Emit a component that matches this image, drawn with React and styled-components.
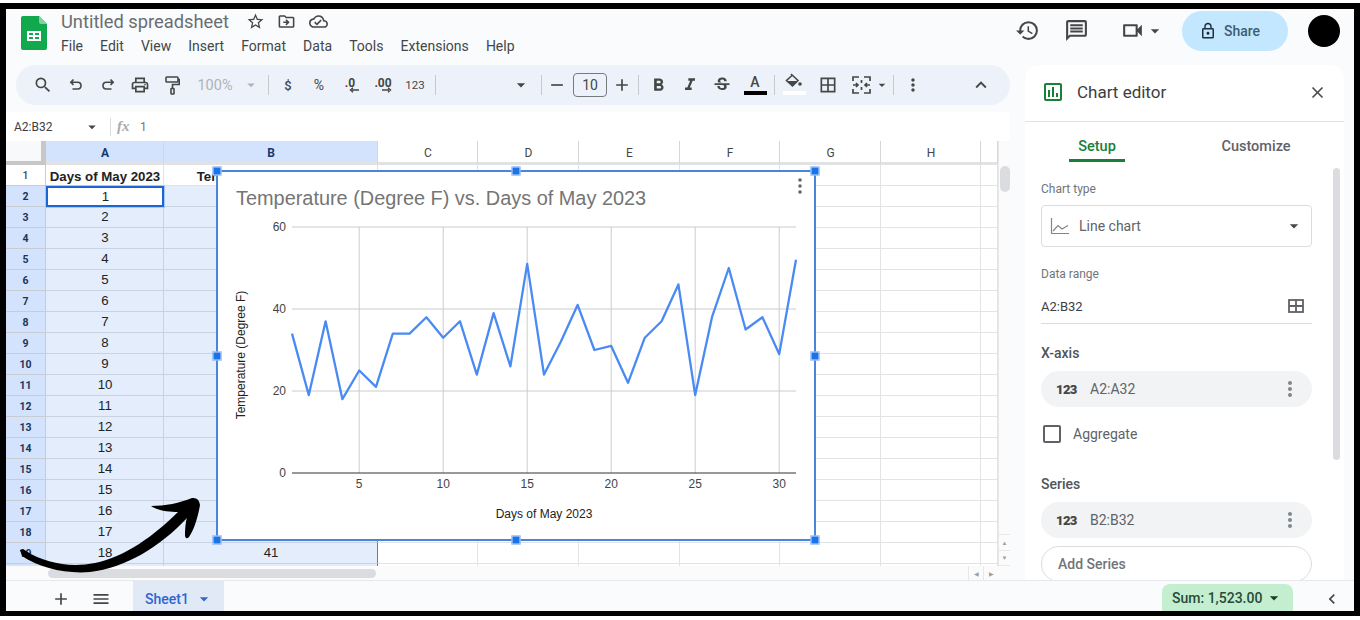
import styled, { createGlobalStyle } from "styled-components"
import {
  MdSearch, MdOutlineLocalPrintshop, MdArrowDropDown,
  MdRemove, MdAdd, MdFormatBold, MdFormatItalic, MdStrikethroughS,
  MdBorderAll, MdMoreVert, MdExpandLess, MdHistory, MdOutlineMessage, MdOutlineVideocam,
  MdLockOutline, MdStarBorder, MdOutlineDriveFileMove, MdOutlineCloudDone, MdClose, MdMenu,
  MdChevronLeft, MdOutlineInsertChart,
} from "react-icons/md"

const temps = [34, 19, 37, 18, 25, 21, 34, 34, 38, 33, 37, 24, 39, 26, 51, 24, 32, 41, 30, 31, 22, 33, 37, 46, 19, 38, 50, 35, 38, 29, 52]
const columns = ["A", "B", "C", "D", "E", "F", "G", "H", ""]
const menus = ["File", "Edit", "View", "Insert", "Format", "Data", "Tools", "Extensions", "Help"]

const GlobalStyle = createGlobalStyle`
  html, body { margin: 0; padding: 0; background: #fff; }
  body { font-family: Roboto, "Liberation Sans", sans-serif; color: #444746; }
  * { box-sizing: border-box; }
`

const Frame = styled.div`
  position: relative;
  width: 1360px;
  height: 613px;
  margin-top: 3px;
  border: solid #000;
  border-width: 6px 6px 5px;
  background: #f9fbfd;
  display: flex;
  flex-direction: column;
  overflow: hidden;
`
const Header = styled.header`
  height: 56px;
  flex: none;
  display: flex;
  align-items: flex-start;
  padding-left: 15px;
`
const LogoSlot = styled.div`
  margin-top: 7px;
`
const TitleBlock = styled.div`
  margin-left: 14px;
  display: flex;
  flex-direction: column;
  flex: 1;
`
const TitleRow = styled.div`
  display: flex;
  align-items: center;
  height: 24px;
  font-size: 18.3px;
  color: #6a6e72;
  svg { color: #444746; font-size: 19px; margin-left: 12px; }
  svg:first-of-type { margin-left: 17px; }
  svg:last-of-type { margin-left: 13px; }
`
const MenuRow = styled.nav`
  display: flex;
  gap: 17.1px;
  margin-top: 3px;
  font-size: 14px;
  color: #444746;
  line-height: 20px;
`
const Actions = styled.div`
  display: flex;
  align-items: center;
  height: 41px;
  margin-top: 1px;
  padding-right: 14px;
`
const ActionIcon = styled.span`
  display: flex;
  font-size: ${(p) => p.$size || 25}px;
  color: #444746;
  margin-right: ${(p) => p.$gap || 0}px;
`
const ShareButton = styled.div`
  width: 106px;
  height: 40px;
  border-radius: 20px;
  background: #c2e7ff;
  margin-left: 17px;
  display: flex;
  align-items: center;
  padding-left: 17px;
  gap: 7px;
  font-size: 14px;
  font-weight: 500;
  color: #3f5c72;
  svg { font-size: 18px; color: #1f2d3a; }
`
const Avatar = styled.div`
  width: 32px;
  height: 32px;
  border-radius: 50%;
  background: #000;
  margin-left: 20px;
`
const Body = styled.div`
  flex: 1;
  min-height: 0;
  display: flex;
`
const LeftColumn = styled.div`
  width: 1004px;
  flex: none;
  display: flex;
  flex-direction: column;
`
const Toolbar = styled.div`
  height: 40px;
  flex: none;
  margin-left: 10px;
  padding: 0 13px 0 11px;
  border-radius: 20px;
  background: #edf2fa;
  display: flex;
  align-items: center;
`
const ToolButton = styled.span`
  width: ${(p) => p.$w || 32}px;
  flex: none;
  display: flex;
  align-items: center;
  justify-content: center;
  color: ${(p) => p.$muted ? "#b0b3b6" : "#444746"};
  font-size: ${(p) => p.$size || 20}px;
  font-weight: ${(p) => p.$weight || 400};
  margin-left: ${(p) => p.$ml || 0}px;
`
const ToolSep = styled.span`
  width: 1px;
  height: 20px;
  flex: none;
  background: #c7c9cc;
  margin: 0 ${(p) => p.$r ?? 3}px 0 ${(p) => p.$l ?? 3}px;
`
const DecimalIcon = styled.span`
  display: flex;
  flex-direction: column;
  align-items: center;
  font-size: 12px;
  font-weight: 700;
  line-height: 10px;
  color: #444746;
  svg { margin-top: -1px; margin-left: 7px; }
`
const FontSizeBox = styled.span`
  width: 34px;
  height: 24px;
  flex: none;
  border: 1px solid #777a7d;
  border-radius: 4px;
  display: flex;
  align-items: center;
  justify-content: center;
  font-size: 14px;
  color: #444746;
  margin-left: 4px;
`
const ColorAIcon = styled.span`
  width: 24px;
  display: flex;
  flex-direction: column;
  align-items: center;
  font-size: 14px;
  font-weight: 500;
  line-height: 13px;
  color: #444746;
  &::after {
    content: "";
    width: 23px;
    height: 4px;
    margin-top: 2px;
    background: #000;
  }
`
const FillIcon = styled.span`
  display: flex;
  flex-direction: column;
  align-items: center;
  gap: 3px;
  margin-top: -2px;
  &::after {
    content: "";
    width: 23px;
    height: 4px;
    background: #fff;
  }
`
const Spacer = styled.span`
  flex: 1;
`
const FormulaBar = styled.div`
  height: 29px;
  flex: none;
  margin-top: 7px;
  background: #fff;
  display: flex;
  align-items: center;
  padding-left: 8px;
  font-size: 12px;
  color: #3c4043;
`
const RangeName = styled.span`
  width: 66px;
`
const FormulaSep = styled.span`
  width: 1px;
  height: 18px;
  background: #dadce0;
  margin: 0 6px 0 6px;
`
const FxLabel = styled.span`
  width: 23px;
  font-family: "Liberation Serif", serif;
  font-style: italic;
  font-weight: 700;
  font-size: 15px;
  color: #a8abae;
`
const FormulaValue = styled.span`
  color: #70757a;
`
const Sheet = styled.div`
  position: relative;
  flex: 1;
  min-height: 0;
  display: flex;
  flex-direction: column;
`
const SheetMain = styled.div`
  height: 425px;
  flex: none;
  display: flex;
`
const Cells = styled.div`
  width: 992px;
  height: 425px;
  overflow: hidden;
  background: #fff;
  display: grid;
  grid-template-columns: 40px 118px 214px 100px 101px 101px 100px 101px 100px 17px;
  grid-template-rows: 24px repeat(20, 21px);
  font-family: "Liberation Sans", Arial, sans-serif;
  font-size: 13.25px;
  color: #222;
`
const CornerCell = styled.div`
  background: #f8f9fa;
  border-right: 5px solid #c7c7c7;
  border-bottom: 4px solid #c7c7c7;
`
const ColHead = styled.div`
  display: flex;
  align-items: center;
  justify-content: center;
  font-family: Roboto, sans-serif;
  font-size: 12px;
  font-weight: ${(p) => p.$on ? 700 : 400};
  color: ${(p) => p.$on ? "#17396b" : "#444746"};
  background: ${(p) => p.$on ? "#d3e3fd" : "#fff"};
  border-right: 1px solid #d4d6d8;
  border-bottom: 3px solid #e0e2e4;
  padding: 2px 0 0 1px;
`
const RowHead = styled.div`
  display: flex;
  align-items: center;
  justify-content: center;
  font-family: Roboto, sans-serif;
  font-size: 10.5px;
  font-weight: ${(p) => p.$on ? 700 : 500};
  color: ${(p) => p.$on ? "#1c3557" : "#444746"};
  background: ${(p) => p.$on ? "#d3e3fd" : "#fff"};
  border-right: 1px solid #c9ccd0;
  border-bottom: 1px solid #c9ccd0;
`
const Cell = styled.div`
  display: flex;
  align-items: center;
  justify-content: center;
  white-space: nowrap;
  overflow: hidden;
  padding: ${(p) => p.$bold ? "2px 0 0 1px" : "0 0 1px 1px"};
  font-weight: ${(p) => p.$bold ? 700 : 400};
  background: ${(p) => p.$sel ? "#e3edfb" : "#fff"};
  border-bottom: 1px solid ${(p) => p.$sel ? "#c9d2e0" : "#e2e3e3"};
  border-right: 1px solid ${(p) => p.$edge ? "#4a86d8" : p.$sel ? "#c9d2e0" : "#e2e3e3"};
`
const ActiveCell = styled(Cell)`
  background: #fff;
  border: 2px solid #1a66d2;
  box-shadow: 0 0 0 1px #a8c7fa;
  position: relative;
`
const VScroll = styled.div`
  width: 12px;
  height: 425px;
  position: relative;
  background: #fbfbfb;
  border-left: 1px solid #e8e8e8;
`
const VThumb = styled.div`
  position: absolute;
  top: 25px;
  left: 1px;
  width: 10px;
  height: 26px;
  border-radius: 5px;
  background: #dadce0;
`
const VArrows = styled.div`
  position: absolute;
  bottom: 0;
  left: 0;
  right: 0;
  height: 32px;
  display: flex;
  flex-direction: column;
  border-top: 1px solid #e8e8e8;
`
const ArrowCell = styled.span`
  flex: 1;
  display: flex;
  align-items: center;
  justify-content: center;
  font-size: 6px;
  color: #9aa0a6;
  border-bottom: 1px solid #e8e8e8;
`
const HScroll = styled.div`
  height: 14px;
  flex: none;
  display: flex;
  align-items: center;
  padding-left: 42px;
  background: #fbfbfb;
`
const HThumb = styled.div`
  width: 328px;
  height: 9px;
  border-radius: 5px;
  background: #dadce0;
`
const HArrows = styled.div`
  margin-left: auto;
  margin-right: 12px;
  height: 14px;
  display: flex;
`
const HArrowCell = styled.span`
  width: 15px;
  display: flex;
  align-items: center;
  justify-content: center;
  font-size: 6px;
  color: #9aa0a6;
  border-left: 1px solid #e8e8e8;
`
const ChartBox = styled.div`
  position: absolute;
  left: 211px;
  top: 30px;
  width: 598px;
  height: 369px;
  background: #fff;
  outline: 2px solid #4a86d8;
  outline-offset: -1px;
`
const Handle = styled.span`
  position: absolute;
  width: 9px;
  height: 9px;
  background: #1a73e8;
  border: 1px solid #cfe0f8;
  left: ${(p) => p.$x}%;
  top: ${(p) => p.$y}%;
  transform: translate(-50%, -50%);
`
const ChartSvg = styled.svg`
  display: block;
  font-family: "Liberation Sans", Arial, sans-serif;
`
const CurveArrow = styled.svg`
  position: absolute;
  left: -6px;
  top: -9px;
  pointer-events: none;
`
const Panel = styled.aside`
  width: 319px;
  flex: none;
  margin-left: 15px;
  position: relative;
  background: #fff;
  border-radius: 14px 14px 0 0;
  overflow: hidden;
  display: flex;
  flex-direction: column;
`
const PanelHead = styled.div`
  height: 57px;
  flex: none;
  display: flex;
  align-items: center;
  padding: 0 17px 2px 18px;
  border-bottom: 1px solid #e3e3e3;
  font-size: 17px;
  color: #3c4043;
  svg:first-child { font-size: 24px; color: #188038; margin-right: 12px; margin-left: -2px; }
  svg:last-child { font-size: 19px; color: #444746; margin-left: auto; }
`
const Tabs = styled.div`
  height: 40px;
  flex: none;
  display: flex;
  font-size: 14.5px;
  font-weight: 500;
`
const Tab = styled.div`
  width: ${(p) => p.$w}px;
  margin-left: ${(p) => p.$ml}px;
  height: 40px;
  display: flex;
  align-items: center;
  justify-content: center;
  padding-top: 11px;
  color: ${(p) => p.$on ? "#188038" : "#5f6368"};
  border-bottom: 3px solid ${(p) => p.$on ? "#188038" : "transparent"};
`
const PanelBody = styled.div`
  padding: 0 32px 0 16px;
`
const SmallLabel = styled.div`
  font-size: 12px;
  line-height: 16px;
  color: #70757a;
  margin-top: ${(p) => p.$mt}px;
`
const SelectBox = styled.div`
  height: 42px;
  margin-top: 8px;
  border: 1px solid #dadce0;
  border-radius: 4px;
  display: flex;
  align-items: center;
  padding: 0 7px 1px 8px;
  font-size: 14px;
  color: #5f6368;
  svg:first-child { margin-right: 9px; }
  svg:last-child { font-size: 20px; color: #444746; margin-left: auto; }
`
const RangeField = styled.div`
  height: 34px;
  margin-top: 8px;
  display: flex;
  align-items: center;
  justify-content: space-between;
  border-bottom: 1px solid #dadce0;
  padding: 0 8px 1px 0;
  font-size: 13px;
  color: #3c4043;
`
const SectionTitle = styled.div`
  font-size: 14px;
  font-weight: 500;
  line-height: 18px;
  color: #50545a;
  margin-top: ${(p) => p.$mt}px;
`
const RangeChip = styled.div`
  height: 36px;
  margin-top: 9px;
  border-radius: 18px;
  background: #f1f3f4;
  display: flex;
  align-items: center;
  padding: 0 11px 0 15px;
  font-size: 14px;
  color: #5f6368;
  svg { font-size: 24px; color: #80868b; margin: 0 -1px 0 auto; }
`
const ChipType = styled.span`
  width: 34px;
  font-size: 13px;
  font-weight: 900;
  letter-spacing: -0.6px;
  color: #444746;
`
const CheckRow = styled.div`
  display: flex;
  align-items: center;
  margin-top: 18px;
  margin-left: 2px;
  font-size: 14px;
  color: #5f6368;
`
const CheckBox = styled.span`
  width: 18px;
  height: 18px;
  border: 2px solid #5f6368;
  border-radius: 2px;
  margin-right: 12px;
`
const AddSeries = styled.div`
  height: 36px;
  margin-top: 8px;
  border: 1px solid #dadce0;
  border-radius: 18px;
  display: flex;
  align-items: center;
  padding-left: 16px;
  font-size: 14px;
  font-weight: 500;
  color: #70757a;
`
const PanelScroll = styled.div`
  position: absolute;
  right: 4px;
  top: 103px;
  width: 7px;
  height: 292px;
  border-radius: 4px;
  background: #dadce0;
`
const BottomBar = styled.footer`
  height: 31px;
  flex: none;
  border-top: 1px solid #e6e8ea;
  display: flex;
  align-items: stretch;
  padding-left: 40px;
`
const BarIcon = styled.span`
  display: flex;
  align-items: center;
  justify-content: center;
  width: ${(p) => p.$w}px;
  margin-left: ${(p) => p.$ml || 0}px;
  margin-right: ${(p) => p.$mr || 0}px;
  padding-top: 6px;
  font-size: 20px;
  color: #444746;
`
const SheetTab = styled.div`
  width: 91px;
  margin-left: 17px;
  background: #e1e9f7;
  display: flex;
  align-items: center;
  padding: 6px 0 0 12px;
  font-size: 14px;
  font-weight: 500;
  color: #2f66d0;
  svg { font-size: 20px; margin-left: 5px; }
`
const SumChip = styled.div`
  width: 131px;
  margin: 3px 0 0 auto;
  border-radius: 8px 8px 0 0;
  background: #c4eed0;
  display: flex;
  align-items: center;
  padding-left: 10px;
  font-size: 14px;
  font-weight: 500;
  color: #274b38;
  svg { font-size: 20px; color: #1e3a2b; margin-left: 2px; }
`

const UndoIcon = ({ flip }) => (
  <svg width="14" height="14" viewBox="0 0 14 14" fill="none" stroke="#444746" strokeWidth="1.6" transform={flip ? "scale(-1 1)" : undefined}>
    <path d="M4.5 1.5L1.8 4.2L4.5 6.9M2 4.2H8.6C10.6 4.2 12 5.7 12 7.6C12 9.5 10.6 11 8.6 11H3.5" />
  </svg>
)

const RollerIcon = () => (
  <svg width="15" height="19" viewBox="0 0 15 19" fill="none" stroke="#444746" strokeWidth="1.6">
    <rect x="1" y="1" width="12" height="5" rx="0.8" />
    <path d="M13 3.5H14.2V8.5H7.5V12.5" />
    <rect x="6" y="12.5" width="3" height="5.5" rx="0.6" />
  </svg>
)

const BucketIcon = () => (
  <svg width="18" height="15" viewBox="0 0 18 15">
    <path d="M6 1L13 7.5L7.5 13L1.5 7.5L7 2.5" fill="none" stroke="#444746" strokeWidth="1.6" />
    <path d="M2 8H12.5L7.5 13Z" fill="#444746" />
    <circle cx="15" cy="11" r="1.8" fill="#444746" />
  </svg>
)

const MergeIcon = () => (
  <svg width="19" height="18" viewBox="0 0 19 18" fill="none" stroke="#444746" strokeWidth="1.7">
    <path d="M1 5V1H7M12 1H18V5M1 13V17H7M12 17H18V13M1 9H6M4 7L6 9L4 11M18 9H13M15 7L13 9L15 11M9.5 4V7M9.5 11V14" />
  </svg>
)

const LineTypeIcon = () => (
  <svg width="20" height="18" viewBox="0 0 20 18" fill="none" stroke="#80868b" strokeWidth="1.2">
    <path d="M1.5 1V16.5H19" />
    <path d="M3 14L8 8.5L12 12L18 8.5" />
  </svg>
)

const RangeGridIcon = () => (
  <svg width="16" height="14" viewBox="0 0 16 14" fill="none" stroke="#5f6368" strokeWidth="1.8">
    <rect x="1" y="1" width="14" height="12" />
    <path d="M8 1V13M1 7H15" />
  </svg>
)

const SheetsLogo = () => (
  <svg width="26" height="34" viewBox="0 0 26 34">
    <path d="M2 0H18L26 8V32Q26 34 24 34H2Q0 34 0 32V2Q0 0 2 0Z" fill="#12a84e" />
    <path d="M18 0L26 8H20Q18 8 18 6Z" fill="#7fd3a0" />
    <path d="M6 15H20V25H6ZM8 17V19H12V17ZM14 17V19H18V17ZM8 21V23H12V21ZM14 21V23H18V21Z" fill="#fff" fillRule="evenodd" />
  </svg>
)

const ArrowStroke = () => (
  <CurveArrow width="1360" height="620" viewBox="0 0 1360 620">
    <path
      d="M20 550Q23 548 26 551C45 563 70 568 95 563C125 557 155 535 178 512C170 512 158 511 151 506C165 506 180 503 192 498Q199 497 200 505C198 517 194 530 189 537Q186 540 185 536C185 528 186 520 187 518C160 547 125 568 90 572C65 574 40 568 22 556Z"
      fill="#000"
    />
  </CurveArrow>
)

const xAt = (day) => 292 + (day - 1) * 16.8
const yAt = (val) => 473 - val * 4.1

const TempChart = () => (
  <ChartBox>
    <ChartSvg width="598" height="369" viewBox="217 171 598 369">
      <text x="236" y="205" fontSize="19.9" fill="#757575">Temperature (Degree F) vs. Days of May 2023</text>
      {[60, 40, 20].map((v) => (
        <line key={v} x1="292" x2="796" y1={yAt(v)} y2={yAt(v)} stroke="#cccccc" />
      ))}
      {[5, 10, 15, 20, 25, 30].map((d) => (
        <g key={d}>
          <line x1={xAt(d)} x2={xAt(d)} y1="227" y2="473" stroke="#cccccc" />
          <text x={xAt(d)} y="488" fontSize="12" textAnchor="middle" fill="#444">{d}</text>
        </g>
      ))}
      <line x1="292" x2="796" y1="473" y2="473" stroke="#333" />
      {[60, 40, 20, 0].map((v) => (
        <text key={v} x="286" y={yAt(v) + 4} fontSize="12" textAnchor="end" fill="#444">{v}</text>
      ))}
      <polyline
        points={temps.map((t, i) => `${xAt(i + 1)},${yAt(t)}`).join(" ")}
        fill="none"
        stroke="#4a8af4"
        strokeWidth="2.3"
        strokeLinejoin="round"
      />
      <text x="544" y="518" fontSize="12" textAnchor="middle" fill="#222">Days of May 2023</text>
      <text transform="translate(245 355) rotate(-90)" fontSize="12" textAnchor="middle" fill="#222">Temperature (Degree F)</text>
      <g fill="#666">
        <circle cx="800" cy="180" r="1.8" />
        <circle cx="800" cy="186" r="1.8" />
        <circle cx="800" cy="192" r="1.8" />
      </g>
    </ChartSvg>
    {[[0, 0], [50, 0], [100, 0], [0, 50], [100, 50], [0, 100], [50, 100], [100, 100]].map(([x, y]) => (
      <Handle key={`${x}-${y}`} $x={x} $y={y} />
    ))}
  </ChartBox>
)

// row 20 only peeks out below the fold, so it stays without text
const SheetRow = ({ r }) => {
  const sel = r > 1
  const visible = r < 20
  const A = r === 2 ? ActiveCell : Cell
  return (
    <>
      <RowHead $on={sel}>{visible && r}</RowHead>
      <A $sel={sel} $bold={!sel}>{visible && (sel ? r - 1 : "Days of May 2023")}</A>
      <Cell $sel={sel} $bold={!sel} $edge={sel}>{visible && (sel ? temps[r - 2] : "Temperature (Degree F)")}</Cell>
      {[0, 1, 2, 3, 4, 5, 6].map((i) => <Cell key={i} />)}
    </>
  )
}

const SheetCells = () => (
  <Cells>
    <CornerCell />
    {columns.map((c, i) => (
      <ColHead key={i} $on={i < 2}>{c}</ColHead>
    ))}
    {Array.from({ length: 20 }, (_, i) => i + 1).map((r) => (
      <SheetRow key={r} r={r} />
    ))}
  </Cells>
)

export default function App() {
  return (
    <>
      <GlobalStyle />
      <Frame>
        <Header>
          <LogoSlot><SheetsLogo /></LogoSlot>
          <TitleBlock>
            <TitleRow>
              Untitled spreadsheet
              <MdStarBorder />
              <MdOutlineDriveFileMove />
              <MdOutlineCloudDone />
            </TitleRow>
            <MenuRow>
              {menus.map((m) => <span key={m}>{m}</span>)}
            </MenuRow>
          </TitleBlock>
          <Actions>
            <ActionIcon $gap={24}><MdHistory /></ActionIcon>
            <ActionIcon $gap={31}><MdOutlineMessage /></ActionIcon>
            <ActionIcon><MdOutlineVideocam /></ActionIcon>
            <ActionIcon $size={20}><MdArrowDropDown /></ActionIcon>
            <ShareButton><MdLockOutline />Share</ShareButton>
            <Avatar />
          </Actions>
        </Header>
        <Body>
          <LeftColumn>
            <Toolbar>
              <ToolButton><MdSearch /></ToolButton>
              <ToolButton $ml={1}><UndoIcon /></ToolButton>
              <ToolButton><UndoIcon flip /></ToolButton>
              <ToolButton><MdOutlineLocalPrintshop /></ToolButton>
              <ToolButton><RollerIcon /></ToolButton>
              <ToolButton $w={54} $muted $size={14.5}>100%</ToolButton>
              <ToolButton $w={18} $muted><MdArrowDropDown /></ToolButton>
              <ToolSep $l={8} $r={3} />
              <ToolButton $size={13} $weight={500}>$</ToolButton>
              <ToolButton $size={14} $ml={-1}>%</ToolButton>
              <ToolButton $ml={-1}>
                <DecimalIcon>.0<svg width="10" height="6" viewBox="0 0 10 6"><path d="M10 3H3M4 0.8L1.5 3L4 5.2" fill="none" stroke="#444746" strokeWidth="1.4" /></svg></DecimalIcon>
              </ToolButton>
              <ToolButton $ml={1}>
                <DecimalIcon>.00<svg width="10" height="6" viewBox="0 0 10 6"><path d="M0 3H7M6 0.8L8.5 3L6 5.2" fill="none" stroke="#444746" strokeWidth="1.4" /></svg></DecimalIcon>
              </ToolButton>
              <ToolButton $size={11.5}>123</ToolButton>
              <ToolSep $l={4} $r={75} />
              <ToolButton $w={20}><MdArrowDropDown /></ToolButton>
              <ToolSep $l={10} $r={3} />
              <ToolButton $w={24}><MdRemove /></ToolButton>
              <FontSizeBox>10</FontSizeBox>
              <ToolButton $w={24} $ml={3}><MdAdd /></ToolButton>
              <ToolSep $l={4} $r={3} />
              <ToolButton $size={21}><MdFormatBold /></ToolButton>
              <ToolButton $size={20}><MdFormatItalic /></ToolButton>
              <ToolButton><MdStrikethroughS /></ToolButton>
              <ToolButton $ml={1}><ColorAIcon>A</ColorAIcon></ToolButton>
              <ToolSep $l={3} $r={3} />
              <ToolButton><FillIcon><BucketIcon /></FillIcon></ToolButton>
              <ToolButton $ml={2}><MdBorderAll /></ToolButton>
              <ToolButton $ml={1}><MergeIcon /></ToolButton>
              <ToolButton $w={16} $ml={-3}><MdArrowDropDown /></ToolButton>
              <ToolSep $l={3} $r={3} />
              <ToolButton><MdMoreVert /></ToolButton>
              <Spacer />
              <ToolButton $size={22}><MdExpandLess /></ToolButton>
            </Toolbar>
            <FormulaBar>
              <RangeName>A2:B32</RangeName>
              <ToolButton $w={24} $size={18}><MdArrowDropDown /></ToolButton>
              <FormulaSep />
              <FxLabel>fx</FxLabel>
              <FormulaValue>1</FormulaValue>
            </FormulaBar>
            <Sheet>
              <SheetMain>
                <SheetCells />
                <VScroll>
                  <VThumb />
                  <VArrows>
                    <ArrowCell>▲</ArrowCell>
                    <ArrowCell>▼</ArrowCell>
                  </VArrows>
                </VScroll>
              </SheetMain>
              <HScroll>
                <HThumb />
                <HArrows>
                  <HArrowCell>◀</HArrowCell>
                  <HArrowCell>▶</HArrowCell>
                </HArrows>
              </HScroll>
              <TempChart />
            </Sheet>
          </LeftColumn>
          <Panel>
            <PanelHead>
              <MdOutlineInsertChart />
              Chart editor
              <MdClose />
            </PanelHead>
            <Tabs>
              <Tab $on $w={56} $ml={44}>Setup</Tab>
              <Tab $w={90} $ml={86}>Customize</Tab>
            </Tabs>
            <PanelBody>
              <SmallLabel $mt={19}>Chart type</SmallLabel>
              <SelectBox><LineTypeIcon />Line chart<MdArrowDropDown /></SelectBox>
              <SmallLabel $mt={19}>Data range</SmallLabel>
              <RangeField>A2:B32<RangeGridIcon /></RangeField>
              <SectionTitle $mt={20}>X-axis</SectionTitle>
              <RangeChip><ChipType>123</ChipType>A2:A32<MdMoreVert /></RangeChip>
              <CheckRow><CheckBox />Aggregate</CheckRow>
              <SectionTitle $mt={32}>Series</SectionTitle>
              <RangeChip><ChipType>123</ChipType>B2:B32<MdMoreVert /></RangeChip>
              <AddSeries>Add Series</AddSeries>
            </PanelBody>
            <PanelScroll />
          </Panel>
        </Body>
        <BottomBar>
          <BarIcon $w={30}><MdAdd /></BarIcon>
          <BarIcon $w={30} $ml={10}><MdMenu /></BarIcon>
          <SheetTab>Sheet1<MdArrowDropDown /></SheetTab>
          <SumChip>Sum: 1,523.00<MdArrowDropDown /></SumChip>
          <BarIcon $w={22} $ml={28} $mr={11}><MdChevronLeft /></BarIcon>
        </BottomBar>
        <ArrowStroke />
      </Frame>
    </>
  )
}
